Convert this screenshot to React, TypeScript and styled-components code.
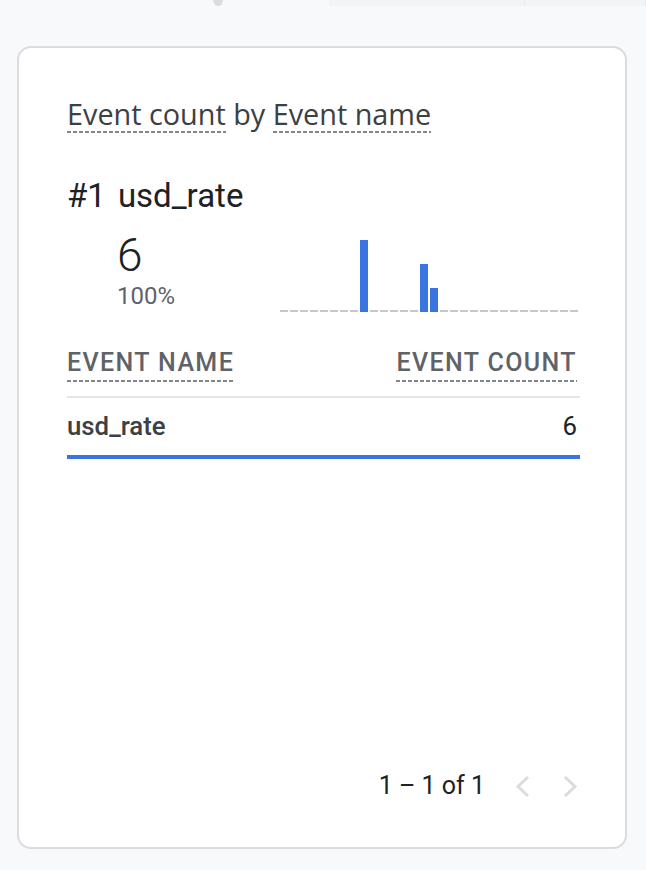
import styled, { createGlobalStyle } from 'styled-components'

const GlobalStyle = createGlobalStyle`
  html, body {
    margin: 0;
    padding: 0;
    background: #f8f9fa;
  }
  body {
    font-family: Roboto, 'Liberation Sans', sans-serif;
    color: #202124;
  }
`

const slots = Array.from({ length: 30 }, (_, i) =>
  i === 8 ? 3 : i === 14 ? 2 : i === 15 ? 1 : 0,
)

const rows = [{ name: 'usd_rate', count: 6 }]
const total = rows.reduce((sum, r) => sum + r.count, 0)

export default function App() {
  return (
    <Page>
      <GlobalStyle />
      <TopStrip>
        <Knob />
        <StripPanel>
          <StripCell $width={195} />
          <StripCell $width={120} />
        </StripPanel>
      </TopStrip>

      <Card>
        <Title>
          <Dotted>Event count</Dotted> by <Dotted>Event name</Dotted>
        </Title>

        <TopItem>
          <span>#1</span>
          <span>usd_rate</span>
        </TopItem>

        <SummaryRow>
          <Stats>
            <BigValue>6</BigValue>
            <Percent>100%</Percent>
          </Stats>
          <svg width="300" height="72" viewBox="0 0 300 72">
            {slots.map((v, i) =>
              v > 0 ? (
                <rect key={i} x={i * 10} y={72 - v * 24} width="8" height={v * 24} fill="#3a74e0" />
              ) : (
                <rect key={i} x={i * 10} y="70" width="8" height="2" fill="#c4c7cb" />
              ),
            )}
          </svg>
        </SummaryRow>

        <TableHead>
          <HeadLabel>Event name</HeadLabel>
          <HeadLabel>Event count</HeadLabel>
        </TableHead>

        {rows.map((r) => (
          <Row key={r.name}>
            <RowLine>
              <RowName>{r.name}</RowName>
              <RowCount>{r.count}</RowCount>
            </RowLine>
            <Track>
              <Fill style={{ width: `${(r.count / total) * 100}%` }} />
            </Track>
          </Row>
        ))}

        <Pager>
          <PagerText>1 – 1 of 1</PagerText>
          <NavButton aria-label="Previous page" disabled>
            <svg width="18" height="24" viewBox="0 0 18 24">
              <polyline points="15,3 5,12.5 15,22" fill="none" stroke="#dadce0" strokeWidth="3" />
            </svg>
          </NavButton>
          <NavButton aria-label="Next page" disabled>
            <svg width="18" height="24" viewBox="0 0 18 24">
              <polyline points="3,3 13,12.5 3,22" fill="none" stroke="#dadce0" strokeWidth="3" />
            </svg>
          </NavButton>
        </Pager>
      </Card>
    </Page>
  )
}

const Page = styled.div`
  display: flex;
  flex-direction: column;
  height: 870px;
  overflow: hidden;
`

const TopStrip = styled.div`
  display: flex;
  height: 6px;
  overflow: hidden;
`

const Knob = styled.div`
  width: 12px;
  height: 12px;
  margin: -6px 0 0 213px;
  border-radius: 50%;
  background: #dadce0;
`

const StripPanel = styled.div`
  display: flex;
  margin-left: 106px;
  flex: 1;
  background: #f3f4f6;
`

const StripCell = styled.div<{ $width: number }>`
  width: ${({ $width }) => $width}px;
  border-right: 1px solid #e8eaed;
`

const Card = styled.div`
  display: flex;
  flex-direction: column;
  box-sizing: border-box;
  width: 610px;
  height: 803px;
  margin: 40px 0 0 17px;
  padding: 47px 45px 45px 48px;
  background: #fff;
  border: 2px solid #dadce0;
  border-radius: 14px;
`

const Title = styled.div`
  font-family: 'Open Sans', Roboto, sans-serif;
  font-size: 28.8px;
  line-height: 38px;
  color: #3c4043;
`

const Dotted = styled.span`
  display: inline-block;
  background: linear-gradient(to right, #80868b 4px, transparent 4px) repeat-x left bottom / 6px 2px;
`

const TopItem = styled.div`
  display: flex;
  gap: 12px;
  margin-top: 43px;
  font-size: 33px;
  line-height: 40px;
  color: #202124;
`

const SummaryRow = styled.div`
  display: flex;
  justify-content: space-between;
  align-items: flex-end;
  margin-top: 15px;

  svg {
    display: block;
  }
`

const Stats = styled.div`
  display: flex;
  flex-direction: column;
  gap: 3px;
  margin: 0 0 2px 50px;
`

const BigValue = styled.div`
  font-size: 46px;
  line-height: 48px;
  font-weight: 300;
  color: #202124;
`

const Percent = styled.div`
  font-size: 24px;
  line-height: 28px;
  color: #5f6368;
`

const TableHead = styled.div`
  display: flex;
  justify-content: space-between;
  margin-top: 36px;
  padding: 0 3px 14px 0;
  border-bottom: 2px solid #e3e5e8;
`

const HeadLabel = styled.span`
  display: inline-block;
  padding-bottom: 4px;
  font-size: 25px;
  line-height: 30px;
  font-weight: 500;
  letter-spacing: 1.4px;
  text-transform: uppercase;
  color: #5f6368;
  background: linear-gradient(to right, #80868b 4px, transparent 4px) repeat-x left bottom / 6px 2px;
`

const Row = styled.div`
  display: flex;
  flex-direction: column;
  padding-top: 13px;
`

const RowLine = styled.div`
  display: flex;
  justify-content: space-between;
  padding-right: 3px;
  font-size: 25.8px;
  line-height: 30px;
  color: #3c4043;
`

const RowName = styled.span`
  font-weight: 500;
`

const RowCount = styled.span`
  color: #202124;
`

const Track = styled.div`
  margin-top: 14px;
  height: 4px;
`

const Fill = styled.div`
  height: 100%;
  background: #3a74e0;
`

const Pager = styled.div`
  display: flex;
  justify-content: flex-end;
  align-items: center;
  gap: 31px;
  margin-top: auto;
  height: 32px;
`

const PagerText = styled.span`
  margin-right: -3px;
  font-size: 25px;
  line-height: 32px;
  color: #202124;
`

const NavButton = styled.button`
  display: flex;
  padding: 0;
  border: none;
  background: none;
  cursor: default;

  svg {
    display: block;
  }
`
